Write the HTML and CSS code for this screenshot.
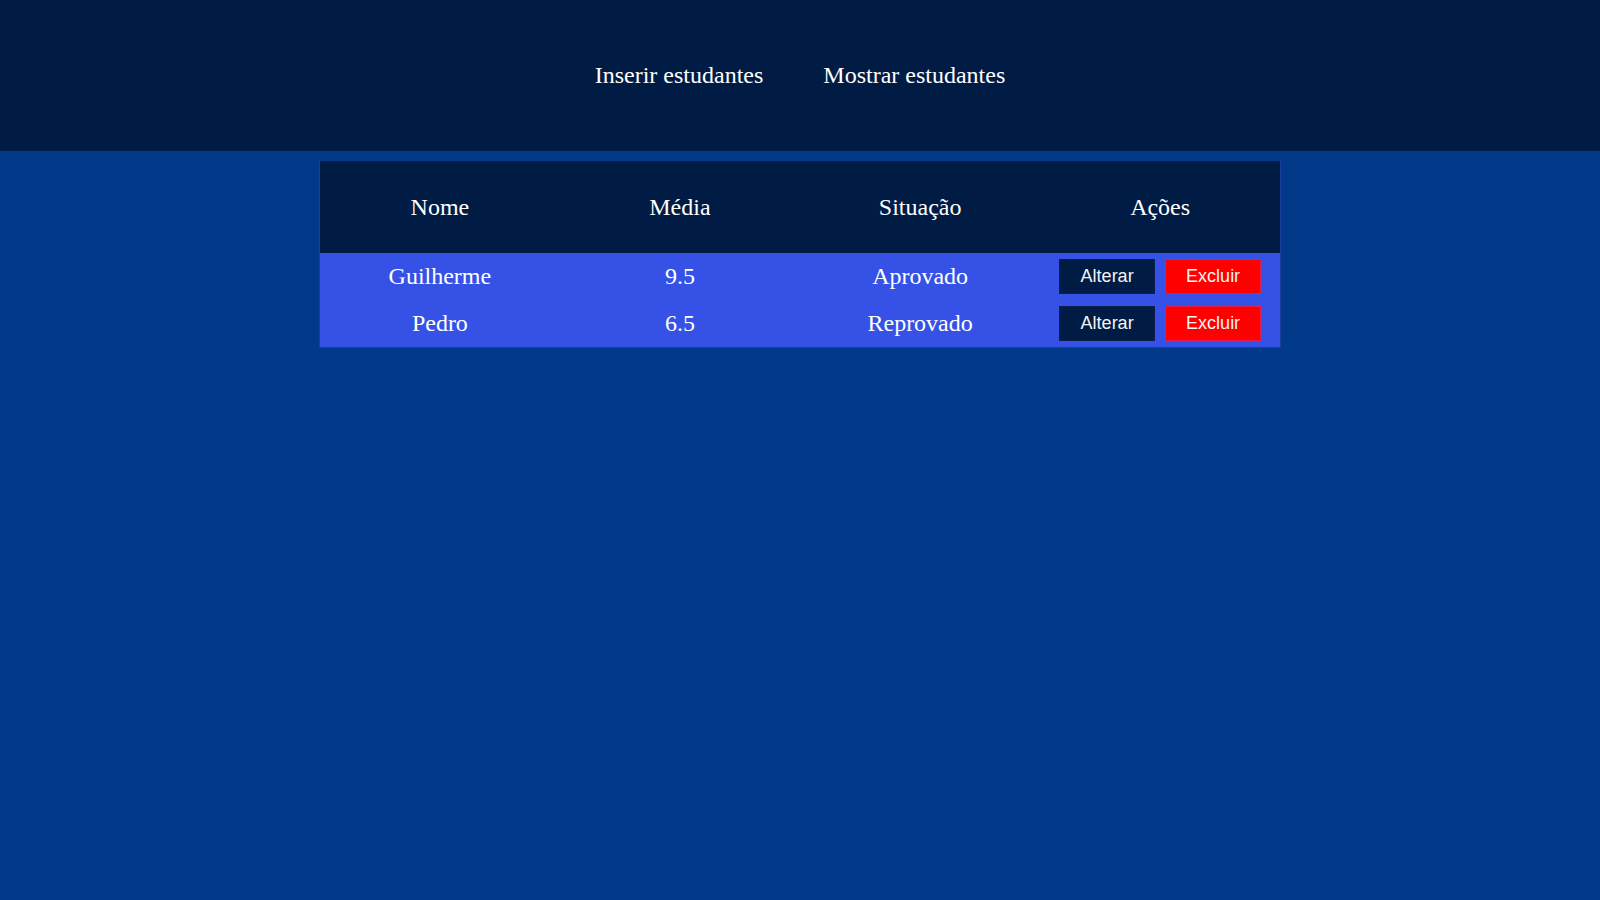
FILE: index.html
```html
<!DOCTYPE html>
<html lang="pt-BR">
<head>
<meta charset="utf-8">
<title>Estudantes</title>
<link rel="stylesheet" href="styles.css">
</head>
<body>
<header class="topbar">
  <nav class="nav">
    <a class="nav-link" href="#">Inserir estudantes</a>
    <a class="nav-link" href="#">Mostrar estudantes</a>
  </nav>
</header>
<main class="content">
  <table class="students">
    <thead>
      <tr>
        <th>Nome</th>
        <th>Média</th>
        <th>Situação</th>
        <th>Ações</th>
      </tr>
    </thead>
    <tbody>
      <tr>
        <td>Guilherme</td>
        <td>9.5</td>
        <td>Aprovado</td>
        <td><div class="actions"><button class="btn btn-edit">Alterar</button><button class="btn btn-delete">Excluir</button></div></td>
      </tr>
      <tr>
        <td>Pedro</td>
        <td>6.5</td>
        <td>Reprovado</td>
        <td><div class="actions"><button class="btn btn-edit">Alterar</button><button class="btn btn-delete">Excluir</button></div></td>
      </tr>
    </tbody>
  </table>
</main>
</body>
</html>
```
FILE: styles.css
```css
html, body {
  margin: 0;
  padding: 0;
}
body {
  background: #003a88;
  font-family: "Liberation Serif", "Times New Roman", serif;
  color: #fff;
  min-height: 900px;
}
.topbar {
  background: #001b44;
  height: 151px;
  display: flex;
  align-items: center;
  justify-content: center;
}
.nav {
  display: flex;
  gap: 60px;
}
.nav-link {
  color: #fff;
  text-decoration: none;
  font-size: 24px;
}
.content {
  padding-top: 10px;
  display: flex;
  justify-content: center;
}
.students {
  width: 962px;
  border-collapse: collapse;
  table-layout: fixed;
  border: 1px solid #1e3d9e;
  border-top: none;
}
.students th {
  background: #001b44;
  font-weight: normal;
  font-size: 24px;
  height: 92px;
  padding: 0;
  text-align: center;
}
.students td {
  background: #3652e6;
  font-size: 24px;
  height: 47px;
  padding: 0;
  text-align: center;
  vertical-align: middle;
}
.actions {
  display: flex;
  justify-content: center;
  gap: 10px;
}
.btn {
  width: 96px;
  height: 35px;
  border: 1px solid transparent;
  font-family: "Liberation Sans", Arial, sans-serif;
  font-size: 18px;
  color: #f4f4f4;
  padding: 0;
  cursor: pointer;
}
.btn-edit {
  background: #001b44;
  border-color: #0c2050;
}
.btn-delete {
  background: #ff0000;
  border-color: #e0204a;
}
```
